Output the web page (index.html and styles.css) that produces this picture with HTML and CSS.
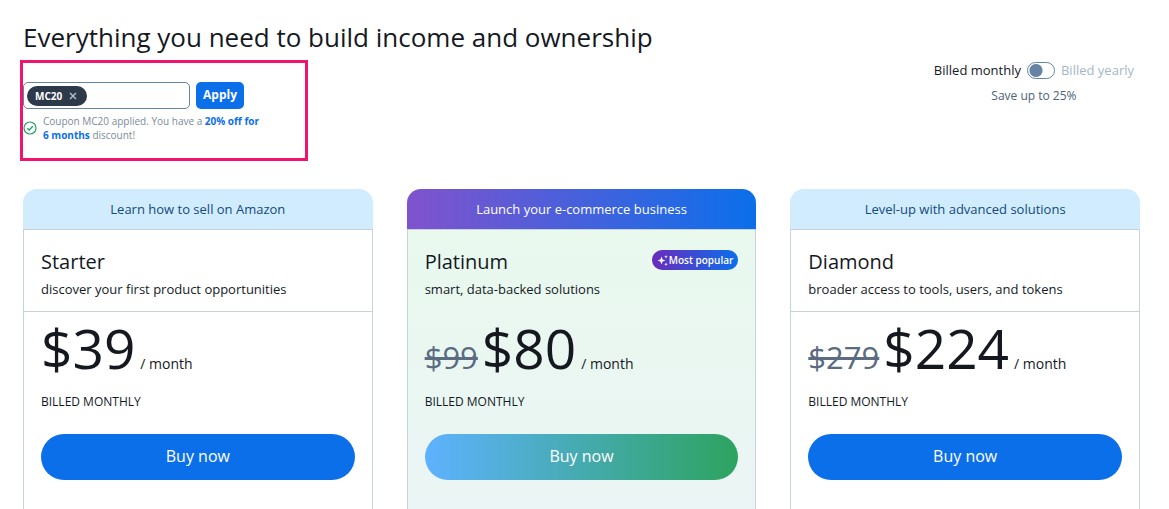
FILE: index.html
```html
<!DOCTYPE html>
<html lang="en">
<head>
  <meta charset="UTF-8">
  <title>Pricing</title>
  <meta name="viewport" content="width=device-width, initial-scale=1.0">
  <link rel="stylesheet" href="styles.css">
</head>
<body>

  <main class="page">
    <h1>Everything you need to build income and ownership</h1>

    <div class="toolbar">
      <form class="coupon">
        <div class="coupon-row">
          <div class="coupon-field">
            <span class="chip">MC20
              <button type="button" class="chip-remove" aria-label="Remove coupon">
                <svg width="8" height="8" viewBox="0 0 8 8"><path d="M1 1l6 6M7 1L1 7" stroke="currentColor" stroke-width="1.4" fill="none"/></svg>
              </button>
            </span>
            <input type="text" class="coupon-input" aria-label="Coupon code">
          </div>
          <button type="submit" class="apply-btn">Apply</button>
        </div>
        <div class="coupon-message">
          <svg width="14" height="14" viewBox="0 0 14 14" fill="none" stroke="#1fa467" stroke-width="1.2">
            <circle cx="7" cy="7" r="6"/>
            <path d="M4.3 7.2l1.9 1.8 3.6-3.7" stroke-width="1.4"/>
          </svg>
          <p>Coupon MC20 applied. You have a <strong>20% off for<br>6 months</strong> discount!</p>
        </div>
      </form>

      <div class="billing">
        <div class="billing-row">
          <label for="billing-toggle">Billed monthly</label>
          <input type="checkbox" id="billing-toggle" class="toggle" role="switch">
          <label for="billing-toggle" class="muted">Billed yearly</label>
        </div>
        <p class="billing-note">Save up to 25%</p>
      </div>
    </div>

    <div class="plans">
      <section class="plan">
        <div class="plan-banner">Learn how to sell on Amazon</div>
        <div class="plan-body">
          <div class="plan-head">
            <h2>Starter</h2>
            <p>discover your first product opportunities</p>
          </div>
          <div class="plan-price">
            <div class="price"><span class="amount">$39</span><span class="period">/ month</span></div>
            <p class="cycle">BILLED MONTHLY</p>
            <button type="button" class="buy-btn">Buy now</button>
          </div>
        </div>
      </section>

      <section class="plan featured">
        <div class="plan-banner">Launch your e-commerce business</div>
        <div class="plan-body">
          <div class="plan-head">
            <div class="plan-title">
              <h2>Platinum</h2>
              <span class="badge">
                <svg width="11" height="11" viewBox="0 0 11 11" fill="#fff">
                  <path d="M4.5 1.5l1.1 2.9 2.9 1.1-2.9 1.1-1.1 2.9-1.1-2.9L.5 5.5l2.9-1.1z"/>
                  <path d="M9 0l.5 1.3 1.3.5-1.3.5L9 3.6l-.5-1.3-1.3-.5 1.3-.5zM9 7.4l.5 1.3 1.3.5-1.3.5L9 11l-.5-1.3-1.3-.5 1.3-.5z"/>
                </svg>
                Most popular
              </span>
            </div>
            <p>smart, data-backed solutions</p>
          </div>
          <div class="plan-price">
            <div class="price"><s>$99</s><span class="amount">$80</span><span class="period">/ month</span></div>
            <p class="cycle">BILLED MONTHLY</p>
            <button type="button" class="buy-btn">Buy now</button>
          </div>
        </div>
      </section>

      <section class="plan">
        <div class="plan-banner">Level-up with advanced solutions</div>
        <div class="plan-body">
          <div class="plan-head">
            <h2>Diamond</h2>
            <p>broader access to tools, users, and tokens</p>
          </div>
          <div class="plan-price">
            <div class="price"><s>$279</s><span class="amount">$224</span><span class="period">/ month</span></div>
            <p class="cycle">BILLED MONTHLY</p>
            <button type="button" class="buy-btn">Buy now</button>
          </div>
        </div>
      </section>
    </div>
  </main>

</body>
</html>
```
FILE: styles.css
```css
* {
  box-sizing: border-box;
}

body {
  margin: 0;
  font-family: 'Open Sans', sans-serif;
  font-size: 13px;
  color: #15191f;
  background: #fff;
}

h1, h2, p {
  margin: 0;
  font-weight: 400;
}

button, input {
  font-family: inherit;
}

.page {
  display: flex;
  flex-direction: column;
  min-height: 100vh;
  padding: 17px 29px 0 23px;
}

h1 {
  margin-bottom: 3px;
  font-size: 26px;
  line-height: 40px;
}

.toolbar {
  display: flex;
  justify-content: space-between;
  align-items: flex-start;
  margin-bottom: 28px;
}

/* coupon */
.coupon {
  width: 288px;
  height: 101px;
  margin-left: -3px;
  padding-top: 19px;
  border: 3px solid #f0146e;
}

.coupon-row {
  display: flex;
  gap: 6px;
}

.coupon-field {
  display: flex;
  align-items: center;
  width: 167px;
  height: 27px;
  padding: 0 3px;
  border: 1px solid #6583a5;
  border-radius: 5px;
}

.chip {
  display: flex;
  align-items: center;
  gap: 7px;
  height: 20px;
  padding: 0 10px 0 8px;
  border-radius: 10px;
  background: #2d3a4a;
  color: #fff;
  font-size: 10px;
  font-weight: 700;
}

.chip-remove {
  display: flex;
  padding: 0;
  border: none;
  background: none;
  color: #b4c3d2;
  cursor: pointer;
}

.coupon-input {
  flex: 1;
  min-width: 0;
  border: none;
  outline: none;
  background: none;
}

.apply-btn {
  width: 48px;
  padding: 0 0 2px;
  border: none;
  border-radius: 5px;
  background: #0b6fea;
  color: #fff;
  font-size: 12px;
  font-weight: 700;
  cursor: pointer;
}

.coupon-message {
  display: flex;
  align-items: center;
  gap: 6px;
  margin-top: 5px;
  color: #7b8b9c;
  font-size: 10px;
  line-height: 14px;
}

.coupon-message strong {
  color: #0b6fea;
}

/* billing switch */
.billing {
  padding-right: 6px;
  text-align: center;
}

.billing-row {
  display: flex;
  align-items: center;
  gap: 6px;
  height: 20px;
}

.billing .muted {
  color: #a5b7c8;
}

.billing-note {
  margin-top: 7px;
  color: #4d627a;
  font-size: 12px;
  line-height: 18px;
}

.toggle {
  appearance: none;
  width: 28px;
  height: 17px;
  margin: 0;
  border: 1px solid #6583a5;
  border-radius: 9px;
  background: radial-gradient(circle at 8px 50%, #6583a5 6px, transparent 7px);
  cursor: pointer;
}

.toggle:checked {
  background: radial-gradient(circle at 18px 50%, #6583a5 6px, transparent 7px);
}

/* plans */
.plans {
  flex: 1;
  display: grid;
  grid-template-columns: repeat(3, 1fr);
  gap: 34px;
}

.plan {
  display: flex;
  flex-direction: column;
}

.plan-banner {
  border-radius: 14px 14px 0 0;
  background: #d1ecff;
  color: #124a7c;
  line-height: 40px;
  text-align: center;
}

.plan-body {
  flex: 1;
  border: 1px solid #c8d2dc;
  border-bottom: none;
}

.plan-head {
  padding: 18px 17px 12px;
  border-bottom: 1px solid #c8d2dc;
}

.plan-title {
  display: flex;
  justify-content: space-between;
  align-items: flex-start;
}

.plan h2 {
  font-size: 20px;
  line-height: 28px;
}

.plan-head p {
  margin-top: 3px;
  line-height: 20px;
}

.plan-price {
  padding: 0 17px 29px;
}

.price {
  display: flex;
  align-items: baseline;
  height: 72px;
  line-height: 72px;
}

.price s {
  margin-right: 4px;
  color: #5b6b82;
  font-size: 31px;
  text-decoration-thickness: 3px;
}

.amount {
  font-size: 55px;
}

.period {
  margin-left: 5px;
  font-size: 14px;
}

.cycle {
  margin-top: 8px;
  font-size: 12px;
  line-height: 20px;
}

.buy-btn {
  width: 100%;
  height: 46px;
  margin-top: 22px;
  padding: 0 0 2px;
  border: none;
  border-radius: 23px;
  background: #0b6fea;
  color: #fff;
  font-size: 16px;
  cursor: pointer;
}

.featured .plan-banner {
  background: linear-gradient(90deg, #8053cd, #0b6fea);
  color: #fff;
}

.featured .plan-body {
  background: linear-gradient(#e9f9ee, #ebf5f5);
}

.featured .plan-head {
  border-bottom-color: transparent;
}

.featured .buy-btn {
  background: linear-gradient(90deg, #5eb2ff, #2da35f);
}

.badge {
  display: flex;
  align-items: center;
  gap: 1px;
  height: 20px;
  margin-top: 2px;
  padding: 0 5px;
  border-radius: 10px;
  background: linear-gradient(90deg, #6a2bbd, #0b6fea);
  color: #fff;
  font-size: 10px;
  font-weight: 600;
}
```
